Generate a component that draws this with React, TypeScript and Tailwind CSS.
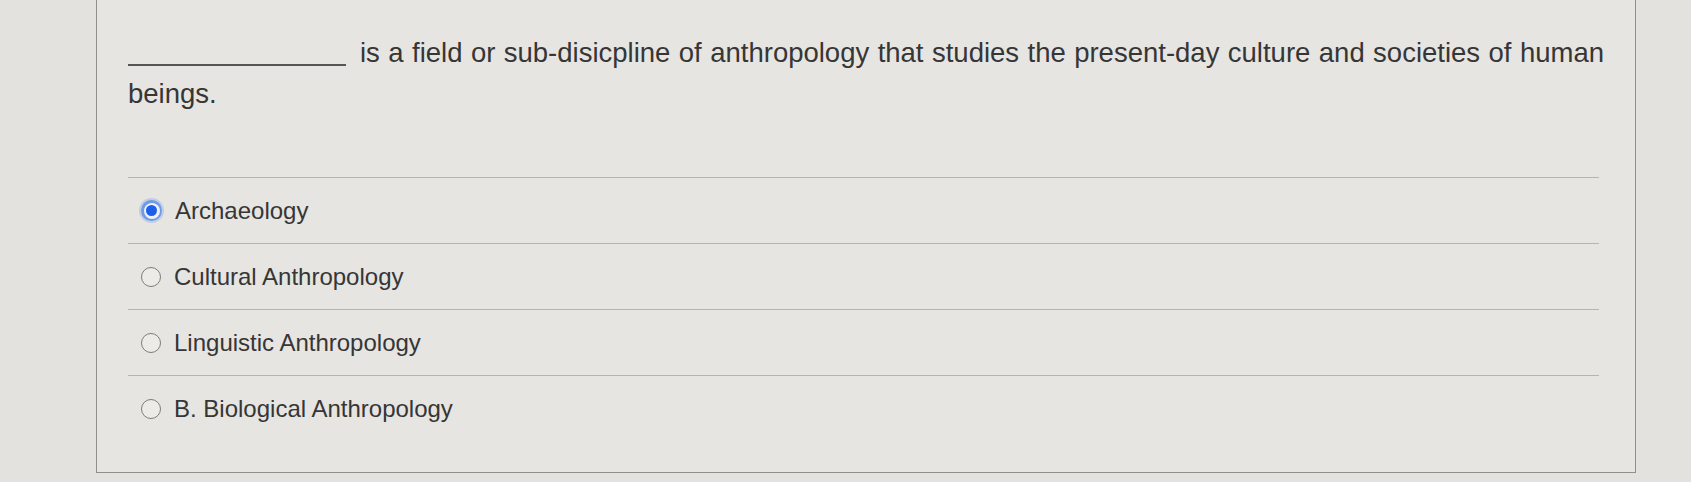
import React from 'react';

const options = [
  { label: 'Archaeology', checked: true },
  { label: 'Cultural Anthropology', checked: false },
  { label: 'Linguistic Anthropology', checked: false },
  { label: 'B. Biological Anthropology', checked: false },
];

const Radio: React.FC<{ checked: boolean }> = ({ checked }) =>
  checked ? (
    <span className="flex h-[21px] w-[21px] shrink-0 items-center justify-center rounded-full bg-[#6d9be8] shadow-[0_0_0_2px_rgba(120,160,230,0.35)]">
      <span className="flex h-[16px] w-[16px] items-center justify-center rounded-full bg-[#eef1f6]">
        <span className="h-[11px] w-[11px] rounded-full bg-[#1d5fe8]" />
      </span>
    </span>
  ) : (
    <span className="h-[20px] w-[20px] shrink-0 rounded-full border-[1.5px] border-[#7c7c7a] bg-[#ecebe7]" />
  );

export default function App() {
  return (
    <div
      className="h-[482px] w-full overflow-hidden bg-[#e3e2de] text-[#363636]"
      style={{ fontFamily: '"Liberation Sans", Arial, sans-serif' }}
    >
      <div className="ml-[96px] h-[473px] w-[1540px] border-x border-b border-[#8f8f8c] bg-[#e6e5e1] pl-[31px] pr-[36px] pt-[32px]">
        <p className="w-[1476px] text-justify text-[27.5px] leading-[41px]">
          <span className="mr-[14px] inline-block w-[218px] border-b-2 border-[#555] align-[-4px]" />
          is a field or sub-disicpline of anthropology that studies the present-day culture and societies of human beings.
        </p>

        <div className="mt-[63px] border-t border-[#b5b4b0]">
          {options.map((o) => (
            <div
              key={o.label}
              className="flex h-[66px] items-center gap-[13px] border-b border-[#b5b4b0] pl-[13px] text-[24px] last:border-b-0"
            >
              <Radio checked={o.checked} />
              <span>{o.label}</span>
            </div>
          ))}
        </div>
      </div>
    </div>
  );
}
